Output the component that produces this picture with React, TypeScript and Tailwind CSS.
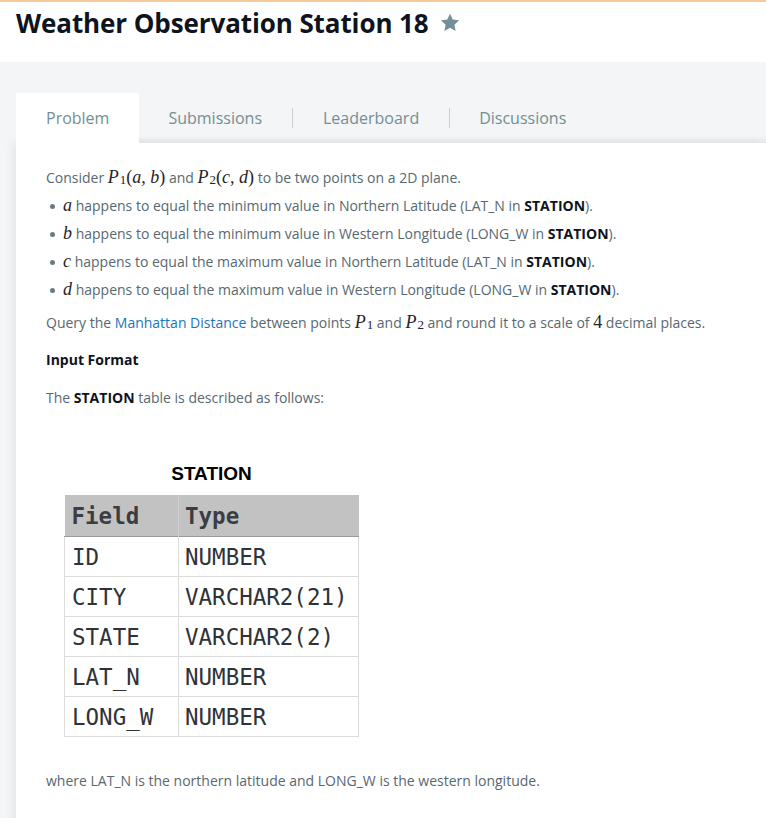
import React from "react";

const M = ({ children }: { children: React.ReactNode }) => (
  <span className="text-[18px] leading-none italic text-[#1f2328]" style={{ fontFamily: '"Liberation Serif", "DejaVu Serif", serif' }}>
    {children}
  </span>
);

const Up = ({ children }: { children: React.ReactNode }) => (
  <span className="text-[18px] leading-none text-[#1f2328]" style={{ fontFamily: '"Liberation Serif", "DejaVu Serif", serif' }}>
    {children}
  </span>
);

const P = ({ n }: { n: string }) => (
  <M>
    P<sub className="not-italic text-[13px] leading-none relative top-[1px] ml-[1px]">{n}</sub>
  </M>
);

const rows = [
  ["ID", "NUMBER"],
  ["CITY", "VARCHAR2(21)"],
  ["STATE", "VARCHAR2(2)"],
  ["LAT_N", "NUMBER"],
  ["LONG_W", "NUMBER"],
];

const bullets: [string, string, string][] = [
  ["a", "minimum value in Northern Latitude", "LAT_N"],
  ["b", "minimum value in Western Longitude", "LONG_W"],
  ["c", "maximum value in Northern Latitude", "LAT_N"],
  ["d", "maximum value in Western Longitude", "LONG_W"],
];

export default function App() {
  return (
    <div className="min-h-screen bg-[#f3f5f6] overflow-hidden" style={{ fontFamily: '"Open Sans", sans-serif' }}>
      <div className="h-[2px] bg-[#f5c99c]" />
      <header className="bg-white h-[60px] px-4 pt-[3px] flex items-start gap-[10px]">
        <h1 className="text-[26px] leading-[36px] font-bold text-[#0e141e] tracking-[-0.1px]">Weather Observation Station 18</h1>
        <svg width="22" height="22" viewBox="0 0 24 24" className="mt-[7px]">
          <path d="M12 1.8l3 6.3 6.9.9-5.1 4.8 1.3 6.9L12 17.3l-6.1 3.4 1.3-6.9L2.1 9l6.9-.9z" fill="#738f98" />
        </svg>
      </header>

      <div className="pl-4 pt-[31px]">
        {/* tabs */}
        <div className="flex h-[50px] items-center text-[16px] text-[#738f93] bg-gradient-to-b from-[#f3f5f6] from-85% to-[#e6eaeb]">
          <div className="h-full bg-white px-[30px] flex items-center">Problem</div>
          <div className="h-full pl-[29px] pr-[30px] flex items-center">Submissions</div>
          <div className="h-[20px] w-px bg-[#c8d0d3]" />
          <div className="h-full px-[30px] flex items-center">Leaderboard</div>
          <div className="h-[20px] w-px bg-[#c8d0d3]" />
          <div className="h-full px-[29px] flex items-center">Discussions</div>
        </div>

        {/* content */}
        <div className="bg-white min-h-[700px] px-[30px] pt-[21px] text-[14px] text-[#576871] shadow-[-4px_0_8px_rgba(0,0,0,0.06)]">
          <p className="leading-[28px] h-[28px]">
            Consider <P n="1" /><Up>(</Up><M>a</M><Up>, </Up><M>b</M><Up>)</Up> and <P n="2" /><Up>(</Up><M>c</M><Up>, </Up><M>d</M><Up>)</Up> to be two points on a 2D plane.
          </p>
          <ul className="pl-[4px]">
            {bullets.map(([v, txt, col]) => (
              <li key={v} className="leading-[28px] h-[28px] flex items-center">
                <span className="w-[5px] h-[5px] rounded-full bg-[#6b7a82] mr-[8px]" />
                <span>
                  <M>{v}</M> happens to equal the {txt} ({col} in <b className="text-[#0e141e]">STATION</b>).
                </span>
              </li>
            ))}
          </ul>
          <p className="leading-[28px] h-[28px] mt-[5px]">
            Query the <span className="text-[#1a75bb]">Manhattan Distance</span> between points <P n="1" /> and <P n="2" /> and round it to a scale of <Up>4</Up> decimal places.
          </p>
          <p className="leading-[28px] mt-[9px] font-bold text-[#0e141e]">Input Format</p>
          <p className="leading-[28px] mt-[10px]">
            The <b className="text-[#0e141e]">STATION</b> table is described as follows:
          </p>

          {/* table figure */}
          <div className="mt-[50px] ml-[18px] w-[295px]">
            <div className="text-center text-[19px] font-bold text-black leading-[24px]" style={{ fontFamily: '"Liberation Sans", Arial, sans-serif' }}>
              STATION
            </div>
            <table className="mt-[9px] w-[295px] border-collapse text-[22.5px] text-[#2f3338]" style={{ fontFamily: '"DejaVu Sans Mono", monospace' }}>
              <thead>
                <tr className="bg-[#c2c2c2] h-[41px] border-b border-[#9a9a9a]">
                  <th className="w-[114px] text-left font-bold pl-[7px] pt-[3px] border-r border-[#d0d0d0] text-[#3a3d42]">Field</th>
                  <th className="text-left font-bold pl-[6px] pt-[3px] text-[#3a3d42]">Type</th>
                </tr>
              </thead>
              <tbody>
                {rows.map(([f, t]) => (
                  <tr key={f} className="h-[40px] border border-[#dcdcdc]">
                    <td className="pl-[7px] pt-[3px] border-r border-[#dcdcdc]">{f}</td>
                    <td className="pl-[6px] pt-[3px]">{t}</td>
                  </tr>
                ))}
              </tbody>
            </table>
          </div>

          <p className="leading-[28px] mt-[30px]">where LAT_N is the northern latitude and LONG_W is the western longitude.</p>
        </div>
      </div>
    </div>
  );
}
